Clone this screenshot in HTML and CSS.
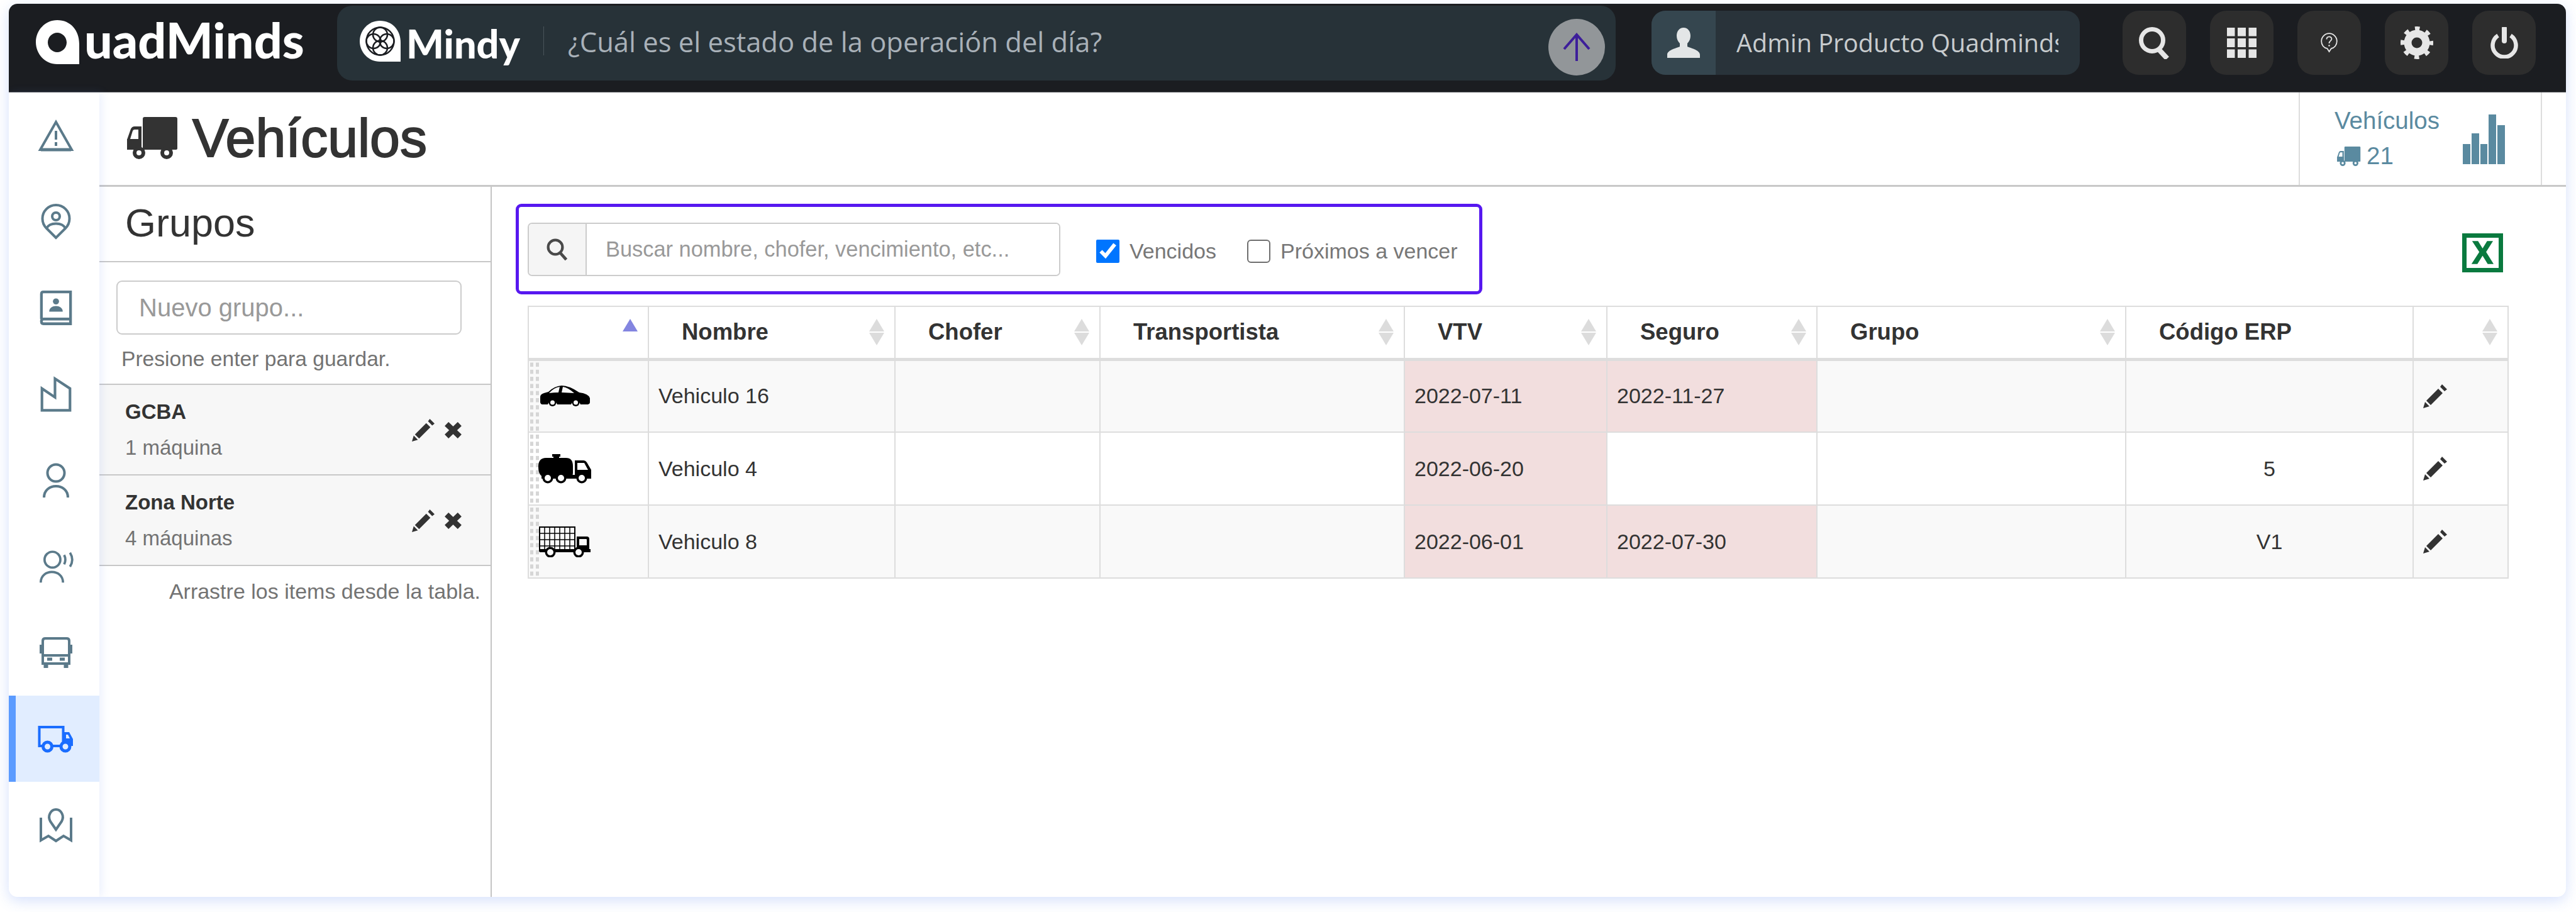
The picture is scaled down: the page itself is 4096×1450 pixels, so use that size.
FILE: index.html
```html
<!DOCTYPE html>
<html lang="es">
<head>
<meta charset="utf-8">
<title>Vehículos</title>
<link rel="stylesheet" href="styles.css">
</head>
<body>
<svg class="defs" aria-hidden="true">
  <symbol id="truck-left" viewBox="0 0 81 67">
    <path d="M26 3q0-3 3-3h49q3 0 3 3v47q0 2-3 2H26z"/>
    <path fill-rule="evenodd" d="M24 15v37H1v-16l6-17q2-4 6-4zM19 20h-6q-2 0-3 2l-4 13h13z"/>
    <rect x="1" y="35" width="23" height="17"/>
    <path fill-rule="evenodd" d="M20 47a10 10 0 1 1 0 20 10 10 0 0 1 0-20zm0 6a4 4 0 1 0 0 8 4 4 0 0 0 0-8zM64 47a10 10 0 1 1 0 20 10 10 0 0 1 0-20zm0 6a4 4 0 1 0 0 8 4 4 0 0 0 0-8z"/>
  </symbol>
  <symbol id="pencil" viewBox="0 0 38 38">
    <path d="M0 38l3-10 7 7zM5 26L24 7l7 7-19 19zM27 4l3-4 8 8-4 3z"/>
  </symbol>
  <symbol id="cross" viewBox="0 0 26 25">
    <path d="M3 3l20 19M23 3L3 22" fill="none" stroke="currentColor" stroke-width="8.500"/>
  </symbol>
</svg>

<div class="app">
  <header class="topbar">
    <div class="logo" aria-label="QuadMinds">
      <svg class="logo-q" viewBox="0 0 69 70"><path fill="#fff" fill-rule="evenodd" d="M34 0c21 0 35 16 35 38v32H34C15 70 0 54 0 35S15 0 34 0zm0 20c-8 0-15 7-15 15.500S26 51 34 51s15-7 15-15.500S42 20 34 20z"/></svg>
      <span class="logo-text">uadMinds</span>
    </div>
    <div class="ask">
      <svg class="mindy-mark" viewBox="0 0 65 65">
        <path fill="#fff" d="M32 0c20 0 33 15 33 35v30H32C14 65 0 50 0 32.500S14 0 32 0z"/>
        <g fill="none" stroke="#1b1d21" stroke-width="2.400">
          <circle cx="32.500" cy="32.500" r="22"/><circle cx="32.500" cy="22" r="11.500"/><circle cx="32.500" cy="43" r="11.500"/><circle cx="22" cy="32.500" r="11.500"/><circle cx="43" cy="32.500" r="11.500"/>
        </g>
      </svg>
      <span class="mindy-name">Mindy</span>
      <span class="ask-sep"></span>
      <span class="ask-text">¿Cuál es el estado de la operación del día?</span>
      <span class="ask-send">
        <svg viewBox="0 0 44 46"><path d="M22 45V3M2 26L22 3l20 23" fill="none" stroke="#3d1e9a" stroke-width="4"/></svg>
      </span>
    </div>
    <div class="user">
      <span class="user-avatar">
        <svg viewBox="0 0 52 48"><path fill="#e3e6e7" d="M26 0c7 0 11 6 11 13 0 5-2 9-5 12v5c3 2 20 5 20 13v5H0v-5c0-8 17-11 20-13v-5c-3-3-5-7-5-12 0-7 4-13 11-13z"/></svg>
      </span>
      <span class="user-name">Admin Producto Quadminds</span>
    </div>
    <nav class="tools">
      <span class="tool"><svg class="i-search" viewBox="0 0 50 51"><circle cx="21" cy="21" r="17.500" fill="none" stroke="#e6e6e6" stroke-width="7"/><path d="M31 35l14 15" stroke="#e6e6e6" stroke-width="8" fill="none"/></svg></span>
      <span class="tool"><svg class="i-grid" viewBox="0 0 47 48" fill="#e6e6e6"><rect width="12.500" height="13.500"/><rect x="17" width="13" height="13.500"/><rect x="34.500" width="12.500" height="13.500"/><rect y="17" width="12.500" height="14"/><rect x="17" y="17" width="13" height="14"/><rect x="34.500" y="17" width="12.500" height="14"/><rect y="34.500" width="12.500" height="13.500"/><rect x="17" y="34.500" width="13" height="13.500"/><rect x="34.500" y="34.500" width="12.500" height="13.500"/></svg></span>
      <span class="tool"><svg class="i-help" viewBox="0 0 27 32"><path d="M13.500 30l-3-4.800C5 24.200 1.200 19.500 1.200 13.500a12.300 12.300 0 0 1 24.600 0c0 6-3.800 10.700-9 11.700z" fill="none" stroke="#e6e6e6" stroke-width="1.800"/><path d="M9.500 10.500c0-5.500 8-5.500 8-.5 0 3-4 3-4 7" fill="none" stroke="#e6e6e6" stroke-width="1.800"/><circle cx="13.500" cy="20.500" r="1.300" fill="#e6e6e6"/></svg></span>
      <span class="tool"><svg class="i-gear" viewBox="0 0 52 52"><circle cx="26" cy="26" r="14.500" fill="none" stroke="#e6e6e6" stroke-width="12"/><circle cx="26" cy="26" r="22.500" fill="none" stroke="#e6e6e6" stroke-width="7" stroke-dasharray="7.500 10.170" stroke-dashoffset="3.750"/></svg></span>
      <span class="tool"><svg class="i-power" viewBox="0 0 44 50"><path d="M12 13.500A18.500 18.500 0 1 0 32 13.500" fill="none" stroke="#e6e6e6" stroke-width="6.500"/><path d="M22 2v20" stroke="#e6e6e6" stroke-width="8" stroke-linecap="round"/></svg></span>
    </nav>
  </header>

  <div class="content">
    <nav class="rail">
      <a class="rail-item"><svg viewBox="0 0 54 50" class="ri"><path d="M27 3L52 47H2z"/><path d="M27 17v14M27 35v6"/><path d="M3 47h48" stroke-width="5"/></svg></a>
      <a class="rail-item"><svg viewBox="0 0 48 56" class="ri"><path d="M24 53L9 38A21.500 21.500 0 1 1 39 38z"/><circle cx="24" cy="19" r="6"/><path d="M9 38c5-10 25-10 30 0"/></svg></a>
      <a class="rail-item"><svg viewBox="0 0 48 52" class="ri"><path d="M2.500 42V5q0-3 3-3h40v47h-40q-3 0-3-3.500 0-3.500 3-3.500h40"/><circle cx="24" cy="16" r="4.500" class="fill"/><path d="M14 31c0-11 20-11 20 0z" class="fill"/></svg></a>
      <a class="rail-item"><svg viewBox="0 0 48 54" class="ri"><path d="M2.500 51.500V18l20 13.500V3l23 15v33.500z"/></svg></a>
      <a class="rail-item"><svg viewBox="0 0 44 56" class="ri"><circle cx="22" cy="16" r="13.500"/><path d="M3 55c0-24 38-24 38 0"/></svg></a>
      <a class="rail-item"><svg viewBox="0 0 58 56" class="ri"><circle cx="23" cy="16" r="13.500"/><path d="M3 55c0-24 38-24 38 0"/><path d="M43 8c3 6 3 10 0 16M53 4c5 8 5 16 0 24"/></svg></a>
      <a class="rail-item"><svg viewBox="0 0 52 50" class="ri ri-bus"><path d="M5 6q0-4 4-4h34q4 0 4 4v36H5zM5 29h42"/><path d="M2 12v14M50 12v14" stroke-width="4"/><path d="M12 35h8M32 35h8" stroke-width="5"/><path d="M10 43v6M42 43v6" stroke-width="7"/></svg></a>
      <a class="rail-item active"><svg viewBox="0 0 58 44" class="ri ri-truck"><path d="M10 33H2.500V3h38v30H21M40 33h-9"/><path d="M41 11h9l6 11v11h-4v-2h-11z" class="fill"/><circle cx="15.500" cy="34" r="7"/><circle cx="44" cy="34" r="7"/><path d="M45 15h3l3 6h-6z" class="hole"/></svg></a>
      <a class="rail-item"><svg viewBox="0 0 52 56" class="ri"><path d="M26 35L17 22c-5-9 1-19 9-19s14 10 9 19z"/><path d="M2 17v36l12-7 12 8 12-8 12 7V17" transform="translate(0 -1)"/></svg></a>
    </nav>

    <main class="page">
      <div class="page-head">
        <h1 class="title"><svg class="title-icon"><use href="#truck-left"/></svg>Vehículos</h1>
        <div class="stat">
          <div class="stat-info">
            <span class="stat-name">Vehículos</span>
            <span class="stat-count"><svg class="stat-icon"><use href="#truck-left"/></svg>21</span>
          </div>
          <div class="bars"><i class="b1"></i><i class="b2"></i><i class="b1"></i><i class="b3"></i><i class="b4"></i></div>
        </div>
      </div>

      <div class="page-body">
        <aside class="groups">
          <h2 class="groups-title">Grupos</h2>
          <div class="group-new">
            <input class="group-input" type="text" placeholder="Nuevo grupo...">
            <p class="hint">Presione enter para guardar.</p>
          </div>
          <div class="group">
            <div class="group-info"><strong>GCBA</strong><span>1 máquina</span></div>
            <svg class="g-pencil"><use href="#pencil"/></svg><svg class="g-cross"><use href="#cross"/></svg>
          </div>
          <div class="group">
            <div class="group-info"><strong>Zona Norte</strong><span>4 máquinas</span></div>
            <svg class="g-pencil"><use href="#pencil"/></svg><svg class="g-cross"><use href="#cross"/></svg>
          </div>
          <p class="drag-hint">Arrastre los items desde la tabla.</p>
        </aside>

        <section class="vehicles">
          <div class="bar">
            <div class="toolbar">
              <div class="search">
                <span class="search-addon"><svg viewBox="0 0 30 30"><circle cx="12.500" cy="12.500" r="9.500" fill="none" stroke="#4a4a4a" stroke-width="3.500"/><path d="M19 20l8 9" stroke="#4a4a4a" stroke-width="4"/></svg></span>
                <input class="search-input" type="text" placeholder="Buscar nombre, chofer, vencimiento, etc...">
              </div>
              <label class="check"><input type="checkbox" checked>Vencidos</label>
              <label class="check"><input type="checkbox">Próximos a vencer</label>
            </div>
            <span class="excel">X</span>
          </div>

          <table class="grid">
            <colgroup><col class="c1"><col class="c2"><col class="c3"><col class="c4"><col class="c5"><col class="c6"><col class="c7"><col class="c8"><col class="c9"></colgroup>
            <thead>
              <tr>
                <th><div class="th"><span></span><span class="sort sorted"><i class="up"></i><i class="down"></i></span></div></th>
                <th><div class="th"><span>Nombre</span><span class="sort"><i class="up"></i><i class="down"></i></span></div></th>
                <th><div class="th"><span>Chofer</span><span class="sort"><i class="up"></i><i class="down"></i></span></div></th>
                <th><div class="th"><span>Transportista</span><span class="sort"><i class="up"></i><i class="down"></i></span></div></th>
                <th><div class="th"><span>VTV</span><span class="sort"><i class="up"></i><i class="down"></i></span></div></th>
                <th><div class="th"><span>Seguro</span><span class="sort"><i class="up"></i><i class="down"></i></span></div></th>
                <th><div class="th"><span>Grupo</span><span class="sort"><i class="up"></i><i class="down"></i></span></div></th>
                <th><div class="th"><span>Código ERP</span></div></th>
                <th><div class="th"><span></span><span class="sort"><i class="up"></i><i class="down"></i></span></div></th>
              </tr>
            </thead>
            <tbody>
              <tr>
                <td class="handle"><svg class="v-icon v-car" viewBox="0 0 82 34"><path fill-rule="evenodd" d="M2 20q-1-6 6-8l7-2Q24 1 36 0q12 0 28 11 15 2 17 9v7q0 2-3 3H66a8 8 0 0 0-15 0H29a8 8 0 0 0-15 0H5q-3-1-3-4zM16 12q8-1 15-1l2-9q-9 1-17 10zM36 11l20 1Q46 3 38 2z"/><circle cx="21.500" cy="27" r="6"/><circle cx="58.500" cy="27" r="6"/><circle cx="21.500" cy="27" r="3.500" fill="#f9f9f9"/><circle cx="58.500" cy="27" r="3.500" fill="#f9f9f9"/></svg></td>
                <td>Vehiculo 16</td><td></td><td></td><td class="due">2022-07-11</td><td class="due">2022-11-27</td><td></td><td class="num"></td><td><svg class="t-pencil"><use href="#pencil"/></svg></td>
              </tr>
              <tr>
                <td class="handle"><svg class="v-icon v-tank" viewBox="0 0 84 47"><path d="M22 0h13v4h-2v2h11q11 0 11 13v11q0 6-6 6H10Q0 36 0 20 0 6 12 6h12V4h-2z"/><path fill-rule="evenodd" d="M58 10h14q3 0 5 3l7 12v14H58zM62 14v11h17l-6-11z"/><rect x="5" y="33" width="76" height="6"/><g fill="#000"><circle cx="15" cy="38" r="8.500"/><circle cx="36" cy="38" r="8.500"/><circle cx="69" cy="38" r="8.500"/></g><g fill="#fff"><circle cx="15" cy="38" r="5"/><circle cx="36" cy="38" r="5"/><circle cx="69" cy="38" r="5"/></g></svg></td>
                <td>Vehiculo 4</td><td></td><td></td><td class="due">2022-06-20</td><td></td><td></td><td class="num">5</td><td><svg class="t-pencil"><use href="#pencil"/></svg></td>
              </tr>
              <tr>
                <td class="handle"><svg class="v-icon v-cargo" viewBox="0 0 82 49"><path d="M1 1h56v38H1z" fill="#f9f9f9" stroke="#000" stroke-width="2"/><path d="M9 1v38M17 1v38M25 1v38M33 1v38M41 1v38M49 1v38M1 11h56M1 21h56M1 31h56" stroke="#000" stroke-width="1.500"/><path fill-rule="evenodd" d="M60 16h16q4 0 4 4v16h2v5H1v-5h59zM64 20v10h12V21q0-1-1-1z"/><circle cx="18" cy="41" r="8.500"/><circle cx="63" cy="41" r="8.500"/><circle cx="18" cy="41" r="5" fill="#f9f9f9"/><circle cx="63" cy="41" r="5" fill="#f9f9f9"/></svg></td>
                <td>Vehiculo 8</td><td></td><td></td><td class="due">2022-06-01</td><td class="due">2022-07-30</td><td></td><td class="num">V1</td><td><svg class="t-pencil"><use href="#pencil"/></svg></td>
              </tr>
            </tbody>
          </table>
        </section>
      </div>
    </main>
  </div>
</div>
</body>
</html>
```

FILE: styles.css
```css
* { box-sizing: border-box; }
html, body { margin: 0; height: 100%; }
body {
  background: #fff;
  font-family: "Liberation Sans", Arial, sans-serif;
  color: #333;
  padding: 6px 16px 24px 14px;
  overflow: hidden;
}
.defs { position: absolute; width: 0; height: 0; }

.app {
  height: 100%;
  display: flex;
  flex-direction: column;
  background: #fff;
  border-radius: 14px;
  overflow: hidden;
  box-shadow: 0 6px 22px rgba(70, 120, 240, .22);
}

/* top bar */
.topbar {
  flex: 0 0 141px;
  display: flex;
  align-items: flex-start;
  background: #1b1d21;
  padding-left: 43px;
  border-bottom: 1px solid #55585c;
}
.logo { width: 479px; height: 70px; margin-top: 26px; display: flex; align-items: flex-end; }
.logo-q { width: 69px; height: 70px; flex: none; }
.logo-text {
  font-family: Lato, sans-serif;
  font-weight: 900;
  font-size: 79px;
  line-height: 70px;
  color: #fff;
  margin-left: 8px;
  position: relative;
  top: -4px;
}
.ask {
  width: 2033px;
  height: 119px;
  margin-top: 3px;
  display: flex;
  align-items: center;
  background: #273238;
  border-radius: 24px;
  padding-left: 36px;
}
.mindy-mark { width: 65px; height: 65px; flex: none; margin-top: -7px; }
.mindy-name {
  font-family: Lato, sans-serif;
  font-weight: 900;
  font-size: 63px;
  color: #fff;
  margin-left: 9px;
  width: 218px;
}
.ask-sep { width: 1px; height: 46px; background: #4a545a; margin-top: -8px; }
.ask-text {
  font-family: "Open Sans", sans-serif;
  font-size: 43.500px;
  color: #a9b1b8;
  margin-left: 38px;
  margin-top: -5px;
  flex: 1;
}
.ask-send {
  width: 90px;
  height: 90px;
  border-radius: 50%;
  background: #929699;
  display: flex;
  align-items: center;
  justify-content: center;
  margin-right: 17px;
  margin-top: 12px;
}
.ask-send svg { width: 44px; height: 46px; }

.user {
  width: 681px;
  height: 102px;
  margin: 11px 0 0 57px;
  display: flex;
  align-items: center;
  background: #29333a;
  border-radius: 22px;
  overflow: hidden;
}
.user-avatar {
  flex: 0 0 102px;
  height: 100%;
  background: #35464f;
  display: flex;
  align-items: center;
  justify-content: center;
}
.user-avatar svg { width: 52px; height: 48px; }
.user-name {
  font-family: "Open Sans", sans-serif;
  font-size: 39.500px;
  color: #c8ccce;
  margin-left: 33px;
  width: 512px;
  overflow: hidden;
  white-space: nowrap;
}
.tools { display: flex; gap: 38px; margin: 11px 0 0 68px; }
.tool {
  width: 101px;
  height: 102px;
  background: #2d2d2d;
  border-radius: 26px;
  display: flex;
  align-items: center;
  justify-content: center;
}
.i-search { width: 50px; height: 51px; }
.i-grid { width: 47px; height: 48px; }
.i-help { width: 27px; height: 32px; }
.i-gear { width: 52px; height: 52px; }
.i-power { width: 44px; height: 50px; }

/* left rail */
.content { flex: 1; display: flex; min-height: 0; }
.rail {
  flex: 0 0 144px;
  display: flex;
  flex-direction: column;
  background: #fff;
  box-shadow: 4px 0 14px rgba(90, 130, 240, .12);
  position: relative;
}
.rail-item {
  flex: 0 0 137px;
  display: flex;
  align-items: center;
  justify-content: center;
  padding-left: 6px;
}
.rail-item.active {
  background: #e1edff;
  box-shadow: inset 11px 0 0 #5b9bff;
}
.ri {
  width: 54px;
  height: 56px;
  fill: none;
  stroke: #5b7a8a;
  stroke-width: 4;
  overflow: visible;
}
.ri .fill { fill: currentColor; stroke: none; color: #5b7a8a; }
.ri-truck { stroke: #1a6dff; width: 58px; height: 44px; }
.ri-truck .fill { color: #1a6dff; }
.ri-truck .hole { fill: #e1edff; stroke: none; }
.ri-truck circle { fill: #e1edff; stroke-width: 5; }
.ri-bus { height: 50px; }

/* page */
.page { flex: 1; min-width: 0; display: flex; flex-direction: column; }
.page-head {
  flex: 0 0 150px;
  display: flex;
  justify-content: space-between;
  border-bottom: 3px solid #c8c8c8;
  padding-right: 38px;
}
.title {
  margin: 0 0 0 43px;
  display: flex;
  align-items: center;
  gap: 24px;
  font-size: 86px;
  font-weight: 400;
  -webkit-text-stroke: 2px #333;
  color: #333;
  height: 145px;
}
.title-icon { width: 81px; height: 67px; fill: #333; }
.stat {
  width: 387px;
  display: flex;
  border-left: 2px solid #ddd;
  border-right: 2px solid #ddd;
  padding: 0 0 0 55px;
  color: #5a8aa0;
}
.stat-info { width: 204px; display: flex; flex-direction: column; padding-top: 22px; }
.stat-name { font-size: 38.500px; line-height: 46px; }
.stat-count { font-size: 38.500px; line-height: 46px; display: flex; align-items: center; gap: 9px; margin-top: 10px; padding-left: 3px; }
.stat-icon { width: 39px; height: 31px; fill: #5a8aa0; }
.bars { display: flex; gap: 2px; align-items: flex-end; height: 79px; margin-top: 35px; }
.bars i { width: 11.800px; background: #5a8aa0; }
.b1 { height: 32px; }
.b2 { height: 49px; }
.b3 { height: 79px; }
.b4 { height: 62px; }

.page-body { flex: 1; display: flex; min-height: 0; }

/* groups */
.groups { flex: 0 0 624px; border-right: 2px solid #c4c4c4; }
.groups-title {
  margin: 0;
  height: 120px;
  display: flex;
  align-items: center;
  padding: 0 0 4px 41px;
  font-size: 63px;
  font-weight: 400;
  color: #333;
  border-bottom: 2px solid #c8c8c8;
}
.group-new { height: 195px; padding: 29px 45px 0 27px; border-bottom: 2px solid #c8c8c8; }
.group-input {
  width: 549px;
  height: 86px;
  border: 2px solid #ccc;
  border-radius: 9px;
  padding: 0 34px;
  font: 40px "Liberation Sans", Arial, sans-serif;
  outline: 0;
  display: block;
}
.group-input::placeholder { color: #999; opacity: 1; }
.hint { margin: 19px 0 0 8px; font-size: 33.600px; color: #737373; line-height: 40px; }
.group {
  height: 144px;
  display: flex;
  align-items: center;
  background: #f7f7f7;
  padding: 0 46px 0 41px;
  border-bottom: 2px solid #c8c8c8;
}
.group-info { flex: 1; display: flex; flex-direction: column; gap: 17px; font-size: 33px; line-height: 40px; color: #737373; }
.group-info strong { color: #333; }
.g-pencil { width: 36px; height: 36px; fill: #333; margin: 2px 16px 0 0; }
.g-cross { width: 27px; height: 26px; color: #333; margin-top: 2px; }
.drag-hint { margin: 18px 16px 0 0; text-align: right; font-size: 34px; line-height: 44px; color: #737373; }

/* vehicles */
.vehicles { flex: 1; min-width: 0; padding: 27px 89px 0 57px; }
.bar { display: flex; justify-content: space-between; margin-left: -19px; }
.toolbar {
  width: 1537px;
  height: 144px;
  border: 5.500px solid #5718f0;
  border-radius: 9px;
  padding-left: 14px;
  display: flex;
  align-items: center;
  gap: 57px;
}
.search {
  width: 847px;
  height: 85px;
  display: flex;
  border: 2px solid #ccc;
  border-radius: 7px;
  overflow: hidden;
  flex: none;
}
.search-addon {
  flex: 0 0 92px;
  background: #f5f5f5;
  border-right: 2px solid #ccc;
  display: flex;
  align-items: center;
  justify-content: center;
}
.search-addon svg { width: 36px; height: 36px; }
.search-input {
  flex: 1;
  border: 0;
  outline: 0;
  min-width: 0;
  padding: 0 30px;
  font: 34.400px "Liberation Sans", Arial, sans-serif;
}
.search-input::placeholder { color: #999; opacity: 1; }
.check { display: flex; align-items: center; font-size: 34px; color: #777; margin-top: 6px; }
.check + .check { margin-left: -8px; }
.check input { width: 37px; height: 37px; margin: 0 16px 0 0; }
.check input:not(:checked) {
  appearance: none;
  border: 2.500px solid #6e6e6e;
  border-radius: 6px;
  background: #fff;
}
.excel {
  width: 65px;
  height: 62px;
  margin: 47px 11px 0 0;
  border: 7px solid #0a7a3f;
  color: #0a7a3f;
  font-size: 50px;
  font-weight: 700;
  -webkit-text-stroke: 1.500px #0a7a3f;
  display: flex;
  align-items: center;
  justify-content: center;
}

.grid {
  width: 3148px;
  table-layout: fixed;
  border-collapse: collapse;
  margin-top: 18px;
  font-size: 34px;
  color: #333;
}
.c1 { width: 191px; }
.c2 { width: 392px; }
.c3 { width: 326px; }
.c4 { width: 484px; }
.c5 { width: 322px; }
.c6 { width: 334px; }
.c7 { width: 491px; }
.c8 { width: 457px; }
.c9 { width: 151px; }
.grid th, .grid td { border: 2px solid #ddd; padding: 0; }
.grid th { height: 84px; border-bottom-width: 5px; background: #fff; font-size: 36.500px; text-align: left; padding: 0 16px 0 52px; }
.th { display: flex; justify-content: space-between; align-items: center; }
.sort { display: flex; flex-direction: column; gap: 2px; margin-left: auto; }
.sort i { display: block; width: 0; height: 0; border-left: 12px solid transparent; border-right: 12px solid transparent; }
.sort .up { border-bottom: 20px solid #dcdcdc; }
.sort .down { border-top: 20px solid #dcdcdc; }
.sort.sorted .up { border-bottom-color: #8385e0; }
.sort.sorted .down { border-top-color: transparent; }
.grid td { height: 116px; padding: 0 15px; }
.grid tbody tr:nth-child(odd) td { background-color: #f9f9f9; }
.grid tbody tr:nth-child(even) td { background-color: #fff; }
.grid tbody tr td.due { background-color: #f2dede; }
.grid td.num { text-align: center; }
.grid td.handle {
  padding: 0 0 0 16px;
  background-image: linear-gradient(#d6d6d6 60%, transparent 60%), linear-gradient(#d6d6d6 60%, transparent 60%);
  background-size: 5px 11.300px, 5px 11.300px;
  background-repeat: repeat-y;
  background-position: 2px 3px, 11px 3px;
}
.v-icon { display: block; width: 82px; }
.v-car { height: 34px; }
.v-tank { height: 47px; width: 84px; margin-left: -1px; }
.v-cargo { height: 49px; }
.t-pencil { width: 38px; height: 38px; fill: #333; display: block; }
```
